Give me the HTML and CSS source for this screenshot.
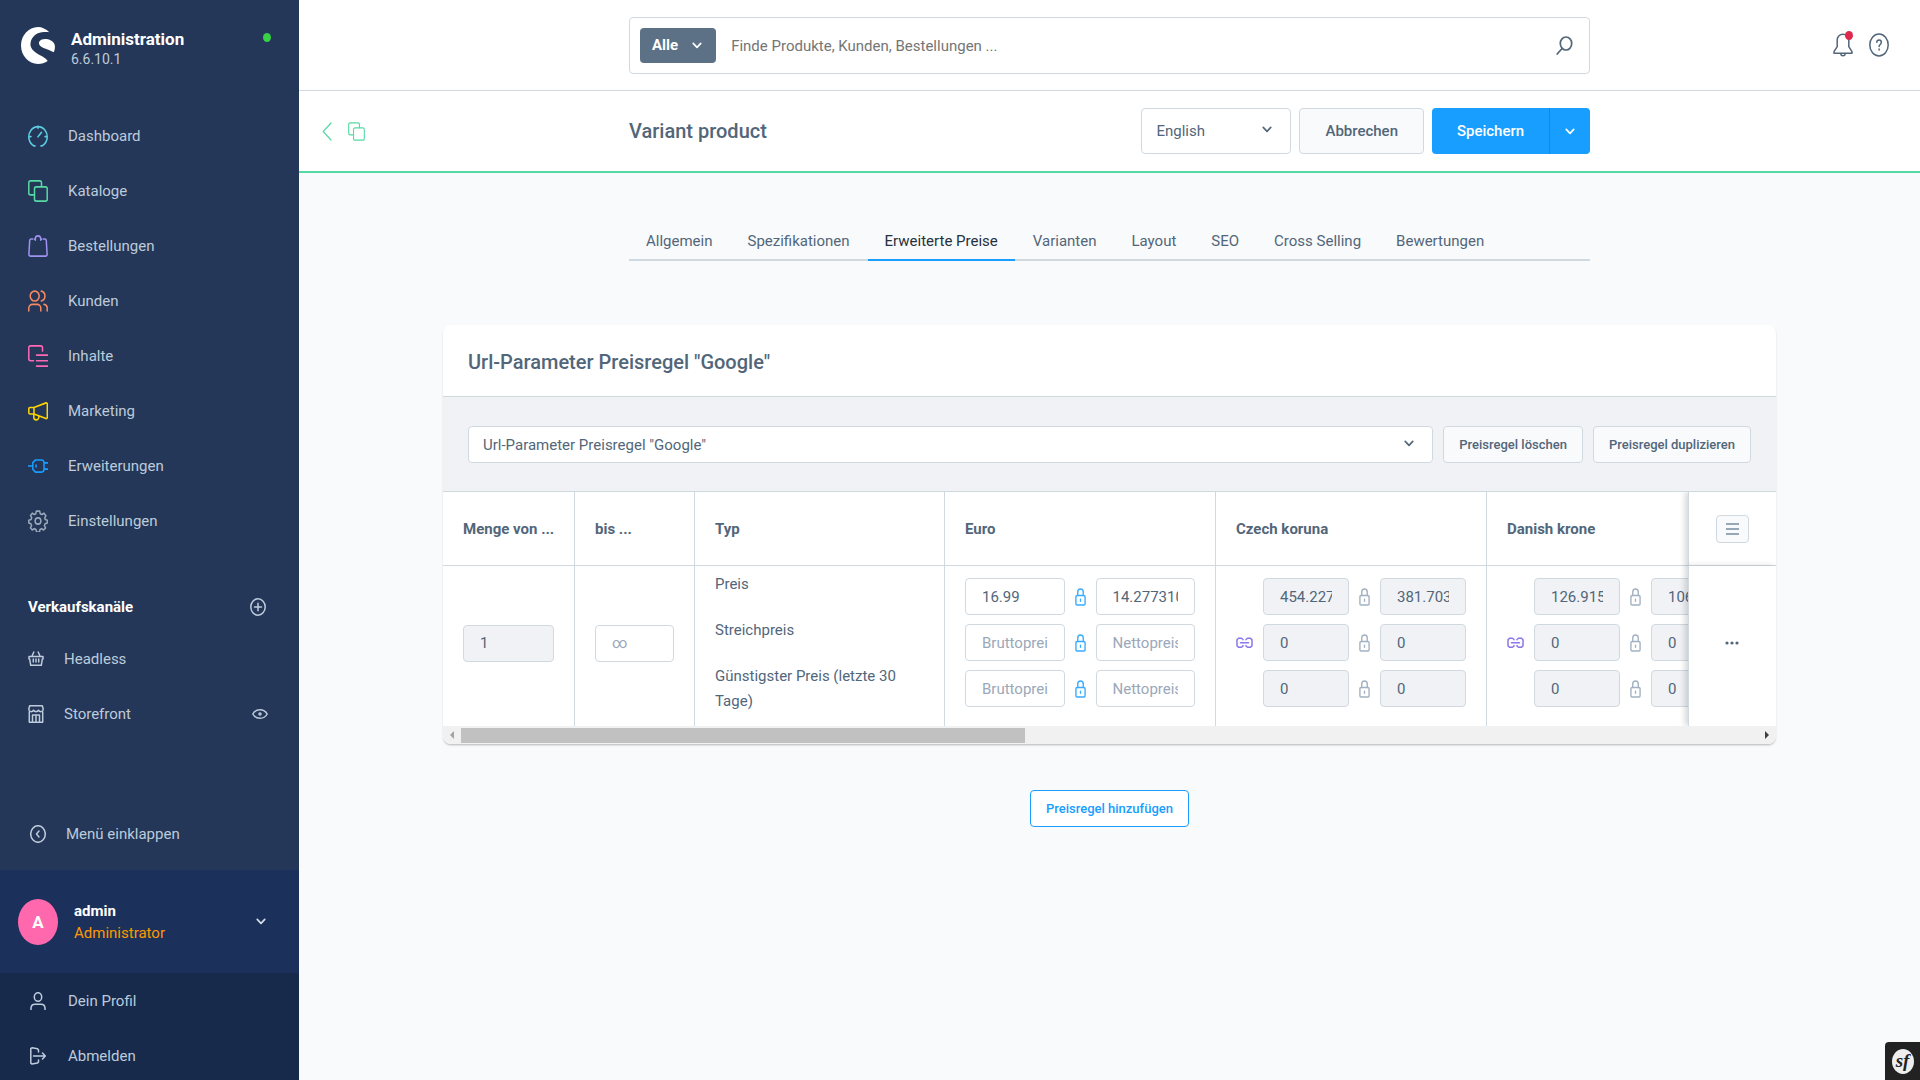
FILE: index.html
```html
<!DOCTYPE html>
<html lang="de">
<head>
<meta charset="utf-8">
<title>Variant product | Administration</title>
<link rel="stylesheet" href="styles.css">
</head>
<body>
<svg class="sprite" aria-hidden="true">
  <symbol id="chevron" viewBox="0 0 12 8" preserveAspectRatio="none"><path d="M1.5 1.5 6 6.2l4.500-4.700"/></symbol>
  <symbol id="lock" viewBox="0 0 12 18" preserveAspectRatio="none"><rect x="1" y="7.500" width="10" height="9.500" rx="1.200"/><path d="M3 7.500V4a3 3 0 0 1 6 0v3.500M6 11.200v2"/></symbol>
  <symbol id="link" viewBox="0 0 17 12" preserveAspectRatio="none"><path d="M7 2.800V2.500L5.500 1.200h-3L1 2.700v6l1.500 1.600h3L7 9V8.500M10 2.800V2.500l1.500-1.300h3L16 2.700v6l-1.500 1.600h-3L10 9V8.500M4.500 5.800h8"/></symbol>
  <symbol id="copy" viewBox="0 0 20 20" preserveAspectRatio="none"><path d="M6 13.500H2.500A1.700 1.700 0 0 1 .8 11.800V2.500A1.700 1.700 0 0 1 2.500.800h9.300a1.700 1.700 0 0 1 1.700 1.700V6"/><rect x="6.500" y="6.200" width="12.700" height="13" rx="1.700"/></symbol>
</svg>
<div class="app">
  <aside class="sidebar">
    <div class="brand">
      <svg class="logo" viewBox="0 0 102 111" preserveAspectRatio="none" aria-hidden="true"><path d="M85 16C75 6 63 0 51 0 23 0 0 25 0 55.500S23 111 51 111c11 0 21-3 29-9-3-9-25-17-38-27C30 66 27 57 29 46c3-16 17-28 33-30 10-1 18-1 23 0z"/><path d="M54 46c2-8 12-11 22-10 14 2 23 9 25 17 2 8 0 17-3 23-10-7-22-9-32-14-8-4-13-8-12-16z"/></svg>
      <div class="brand-text"><strong>Administration</strong><span>6.6.10.1</span></div>
      <span class="status-dot"></span>
    </div>
    <nav class="nav">
      <a href="#" class="cyan"><svg class="nav-icon" viewBox="0 0 20 20" preserveAspectRatio="none"><path d="M7 19H6A9.200 9.200 0 1 1 14 19H13M10 1v2M1 10.500h2M17 10.500h2M10 10.700l3.500-4"/></svg>Dashboard</a>
      <a href="#" class="green"><svg class="nav-icon"><use href="#copy"/></svg>Kataloge</a>
      <a href="#" class="violet"><svg class="nav-icon" viewBox="0 0 20 20" preserveAspectRatio="none"><path d="M4.800 3.600H3.200A1.500 1.500 0 0 0 1.700 5L.9 17.500A1.600 1.600 0 0 0 2.500 19.200h15a1.600 1.600 0 0 0 1.600-1.700L18.300 5a1.500 1.500 0 0 0-1.500-1.400h-1.600M7.300 4.800V3.500a2.700 2.700 0 0 1 5.400 0v1.300M7.300 3.800h-.8M12.700 3.800h.8"/></svg>Bestellungen</a>
      <a href="#" class="orange"><svg class="nav-icon" viewBox="0 0 20 20" preserveAspectRatio="none"><circle cx="6.700" cy="5.500" r="4.500"/><path d="M.8 19v-2.300a3.600 3.600 0 0 1 3.600-3.600h4.800a3.600 3.600 0 0 1 3.600 3.600V19M13.300 1a4.600 4.600 0 0 1 0 9M16 13.100a3.600 3.600 0 0 1 3.200 3.600V19"/></svg>Kunden</a>
      <a href="#" class="pink"><svg class="nav-icon" viewBox="0 0 20 20" preserveAspectRatio="none"><path d="M5.500 14.300H2.500A1.700 1.700 0 0 1 .8 12.600V2.500A1.700 1.700 0 0 1 2.500.8h10.300a1.700 1.700 0 0 1 1.700 1.700V5.500M8.500 9.200h11.300M8.500 14.300h11.300M8.500 19.200h11.300"/></svg>Inhalte</a>
      <a href="#" class="yellow"><svg class="nav-icon" viewBox="0 0 20 20" preserveAspectRatio="none"><path d="M6 6.800 18 2.600a1 1 0 0 1 1.300 1V16a1 1 0 0 1-1.300.9L6 12.700M6 6.800H2A1.200 1.200 0 0 0 .8 8v3.500a1.200 1.200 0 0 0 1.200 1.200h4zM5.800 12.700v2.800a2.500 2.500 0 0 0 5 .2v-1"/></svg>Marketing</a>
      <a href="#" class="blue"><svg class="nav-icon" viewBox="0 0 20 20" preserveAspectRatio="none"><path d="M.3 10h4.300M7.500 4.500h6A2.500 2.500 0 0 1 16 7v6a2.500 2.500 0 0 1-2.500 2.500h-6L4.800 13V7zM16 7.200h3.700M16 12.800h3.700M8 9.200v1.600"/></svg>Erweiterungen</a>
      <a href="#" class="grey"><svg class="nav-icon" viewBox="0 0 20 20" preserveAspectRatio="none"><circle cx="10" cy="10" r="2.900"/><path d="M8.300 1h3.400l.5 2.300 1.700.8 2.100-1.200 1.900 2.300-1.200 2 .6 1.500 2 .6v2.500l-2.200.7-.7 1.700 1.200 2.100-2 1.900-2-1.200-1.600.7-.5 2.300H8.500L8 17.700l-1.700-.7-2.100 1.200-1.800-2 1.200-2-.7-1.700-2.100-.7V9.300l2.200-.6.7-1.700-1.200-2L4.300 2.900l2 1.200L7.800 3.400z"/></svg>Einstellungen</a>
    </nav>
    <div class="channels">
      <div class="channels-head"><h2>Verkaufskanäle</h2>
        <button type="button" class="icon-button" aria-label="Verkaufskanal hinzufügen"><svg class="small-icon" viewBox="0 0 16 18" preserveAspectRatio="none"><ellipse cx="8" cy="9" rx="7.200" ry="8.200"/><path d="M8 5.200v7.600M4.500 9h7"/></svg></button></div>
      <a href="#"><svg class="small-icon" viewBox="0 0 16 18" preserveAspectRatio="none"><path d="M1 6.500h14v2.500h-.700L13.300 15.300H2.700L1.700 9H1zM5.800 2 3.800 6.500M10.200 2l2 4.500M5.300 9v3M8 9v3M10.700 9v3"/></svg>Headless</a>
      <a href="#"><svg class="small-icon" viewBox="0 0 16 18" preserveAspectRatio="none"><path d="M1.700.8h12.600l.9 3.200c0 3-3.300 3.600-4.800 1.200-1 2-3.800 2-4.800 0C4.100 7.600.8 7 .8 4zM1.300 6.500v10.700h13.400V6.500M4.500 17V10h7v7M8 10v7"/></svg>Storefront
        <svg class="eye" viewBox="0 0 16 12" preserveAspectRatio="none"><path d="M.8 6C4 .3 12 .3 15.200 6 12 11.700 4 11.700.8 6z"/><circle cx="8" cy="6" r="1"/></svg></a>
    </div>
    <div class="sidebar-bottom">
      <button type="button" class="collapse"><svg class="small-icon" viewBox="0 0 16 18" preserveAspectRatio="none"><ellipse cx="8" cy="9" rx="7.300" ry="8.300"/><path d="M9 6 6.500 9 9 12"/></svg>Menü einklappen</button>
      <button type="button" class="user">
        <span class="avatar">A</span>
        <span class="user-text"><strong>admin</strong><span>Administrator</span></span>
        <svg class="chevron"><use href="#chevron"/></svg>
      </button>
      <div class="user-menu">
        <a href="#"><svg class="small-icon" viewBox="0 0 16 18" preserveAspectRatio="none"><ellipse cx="8" cy="5" rx="3.700" ry="4.300"/><path d="M1 18v-2a4 4 0 0 1 4-3.700h6A4 4 0 0 1 15 16v2"/></svg>Dein Profil</a>
        <a href="#"><svg class="small-icon" viewBox="0 0 16 18" preserveAspectRatio="none"><path d="M8.500 5V3L7.500 1.800 2 .8.8 1.500v14.700l1.200.9 5.500-1 1-1.200V13M3.500 9h11.500M12.500 6 15.300 9l-2.800 3"/></svg>Abmelden</a>
      </div>
    </div>
  </aside>

  <main class="main">
    <header class="topbar">
      <form class="search" role="search">
        <button type="button" class="search-type">Alle<svg class="chevron"><use href="#chevron"/></svg></button>
        <input type="text" aria-label="Suche" placeholder="Finde Produkte, Kunden, Bestellungen ...">
        <button type="submit" class="icon-button" aria-label="Suchen"><svg class="magnifier" viewBox="0 0 17 19" preserveAspectRatio="none"><ellipse cx="10" cy="7.500" rx="5.700" ry="6.500"/><path d="M6.300 12.300 1.200 18"/></svg></button>
      </form>
      <div class="topbar-actions">
        <button type="button" class="icon-button" aria-label="Benachrichtigungen"><svg class="tool-icon" viewBox="0 0 20 24" preserveAspectRatio="none"><path d="M10 1.200c-3.600 0-5.800 2.600-5.800 6v6.500L1 18.700v1.500h18v-1.500l-3.200-5V7.200c0-3.400-2.200-6-5.800-6zM7.800 20.500c0 3 4.400 3 4.400 0"/></svg><span class="badge"></span></button>
        <button type="button" class="icon-button" aria-label="Hilfe"><svg class="tool-icon" viewBox="0 0 20 24" preserveAspectRatio="none"><ellipse cx="10" cy="12" rx="9.200" ry="11"/><path d="M7.800 9.300c.3-3 4.600-2.900 4.500.2 0 1.900-2.200 2-2.200 4M10.100 16v1"/></svg></button>
      </div>
    </header>

    <div class="smartbar">
      <div class="smartbar-back">
        <a href="#" aria-label="Zurück"><svg class="back" viewBox="0 0 10 19" preserveAspectRatio="none"><path d="M9 1 1.200 9.500 9 18"/></svg></a>
        <a href="#" aria-label="Produkte"><svg class="module"><use href="#copy"/></svg></a>
      </div>
      <div class="smartbar-content">
        <h1>Variant product</h1>
        <div class="smartbar-actions">
          <div class="select language"><select aria-label="Sprache"><option>English</option></select><svg class="chevron"><use href="#chevron"/></svg></div>
          <button type="button" class="button">Abbrechen</button>
          <div class="split"><button type="button">Speichern</button><button type="button" aria-label="Weitere Aktionen"><svg class="chevron"><use href="#chevron"/></svg></button></div>
        </div>
      </div>
    </div>

    <div class="content">
      <nav class="tabs">
        <a href="#">Allgemein</a><a href="#">Spezifikationen</a><a href="#" class="active">Erweiterte Preise</a><a href="#">Varianten</a><a href="#">Layout</a><a href="#">SEO</a><a href="#">Cross Selling</a><a href="#">Bewertungen</a>
      </nav>

      <section class="card">
        <h2 class="card-title">Url-Parameter Preisregel "Google"</h2>
        <div class="toolbar">
          <div class="select rule"><select aria-label="Preisregel"><option>Url-Parameter Preisregel "Google"</option></select><svg class="chevron"><use href="#chevron"/></svg></div>
          <button type="button" class="button small">Preisregel löschen</button>
          <button type="button" class="button small">Preisregel duplizieren</button>
        </div>
        <div class="grid-scroll">
          <table class="grid">
            <colgroup><col class="c-from"><col class="c-to"><col class="c-type"><col class="c-price"><col class="c-price"><col class="c-price"><col class="c-action"></colgroup>
            <thead><tr>
              <th>Menge von ...</th><th>bis ...</th><th>Typ</th><th>Euro</th><th>Czech koruna</th><th>Danish krone</th>
              <th class="sticky"><button type="button" class="columns" aria-label="Spalten"><svg viewBox="0 0 13 12"><path d="M0 1h13M0 6h13M0 11h13"/></svg></button></th>
            </tr></thead>
            <tbody><tr>
              <td><input class="field" aria-label="Menge von" value="1" disabled></td>
              <td><input class="field" aria-label="Menge bis" placeholder="∞"></td>
              <td class="types"><p>Preis</p><p>Streichpreis</p><p>Günstigster Preis (letzte 30 Tage)</p></td>
              <td class="prices">
                <div class="price"><input class="field" aria-label="Preis brutto Euro" value="16.99"><svg class="lock on"><use href="#lock"/></svg><input class="field" aria-label="Preis netto Euro" value="14.277310924"></div>
                <div class="price"><input class="field" aria-label="Streichpreis brutto Euro" placeholder="Bruttopreis"><svg class="lock on"><use href="#lock"/></svg><input class="field" aria-label="Streichpreis netto Euro" placeholder="Nettopreis"></div>
                <div class="price"><input class="field" aria-label="Günstigster Preis brutto Euro" placeholder="Bruttopreis"><svg class="lock on"><use href="#lock"/></svg><input class="field" aria-label="Günstigster Preis netto Euro" placeholder="Nettopreis"></div>
              </td>
              <td class="prices"><div class="inherited">
                <svg class="link"><use href="#link"/></svg>
                <div>
                <div class="price"><input class="field" aria-label="Preis brutto CZK" value="454.2276" disabled><svg class="lock"><use href="#lock"/></svg><input class="field" aria-label="Preis netto CZK" value="381.703" disabled></div>
                <div class="price"><input class="field" aria-label="Streichpreis brutto CZK" value="0" disabled><svg class="lock"><use href="#lock"/></svg><input class="field" aria-label="Streichpreis netto CZK" value="0" disabled></div>
                <div class="price"><input class="field" aria-label="Günstigster Preis brutto CZK" value="0" disabled><svg class="lock"><use href="#lock"/></svg><input class="field" aria-label="Günstigster Preis netto CZK" value="0" disabled></div>
                </div></div>
              </td>
              <td class="prices"><div class="inherited">
                <svg class="link"><use href="#link"/></svg>
                <div>
                <div class="price"><input class="field" aria-label="Preis brutto DKK" value="126.9152" disabled><svg class="lock"><use href="#lock"/></svg><input class="field" aria-label="Preis netto DKK" value="106.651" disabled></div>
                <div class="price"><input class="field" aria-label="Streichpreis brutto DKK" value="0" disabled><svg class="lock"><use href="#lock"/></svg><input class="field" aria-label="Streichpreis netto DKK" value="0" disabled></div>
                <div class="price"><input class="field" aria-label="Günstigster Preis brutto DKK" value="0" disabled><svg class="lock"><use href="#lock"/></svg><input class="field" aria-label="Günstigster Preis netto DKK" value="0" disabled></div>
                </div></div>
              </td>
              <td class="sticky"><button type="button" class="icon-button" aria-label="Aktionen"><svg class="dots" viewBox="0 0 14 4"><circle cx="2" cy="2" r="1.600"/><circle cx="7" cy="2" r="1.600"/><circle cx="12" cy="2" r="1.600"/></svg></button></td>
            </tr></tbody>
          </table>
        </div>
        <div class="scrollbar" aria-hidden="true"><span class="arrow left"></span><span class="track"><span class="thumb"></span></span><span class="arrow right"></span></div>
      </section>

      <button type="button" class="button small add">Preisregel hinzufügen</button>
    </div>
  </main>
</div>
<a href="#" class="debug" aria-label="Symfony"><span>sf</span></a>
</body>
</html>
```

FILE: styles.css
```css
* { box-sizing: border-box; }

body {
  margin: 0;
  font: 15px/24px Roboto, "Liberation Sans", sans-serif;
  color: #52667a;
  background: #f9fafb;
}

a { color: inherit; text-decoration: none; }
button, input, select { font: inherit; color: inherit; }
button { cursor: pointer; }
h1, h2, p { margin: 0; }

svg { display: block; flex: none; fill: none; stroke: currentColor; stroke-width: 1.5; stroke-linecap: round; stroke-linejoin: round; }
.sprite { position: absolute; width: 0; height: 0; }
.chevron { width: 10px; height: 7px; stroke-width: 2; }
.icon-button { display: flex; padding: 0; border: 0; background: none; position: relative; }

.app { display: flex; height: 100vh; overflow: hidden; }

/* Sidebar */
.sidebar {
  display: flex;
  flex-direction: column;
  flex: none;
  width: 299px;
  background: #243758;
  color: #bdcbdb;
}
.sidebar a, .collapse { display: flex; align-items: center; height: 55px; }
.small-icon { width: 16px; height: 18px; }

.brand { display: flex; align-items: flex-start; height: 108px; padding: 27px 28px 0 21px; }
.logo { width: 34px; height: 37px; fill: #fff; stroke: none; }
.brand-text { display: flex; flex-direction: column; flex: 1; margin-left: 16px; }
.brand-text strong { font-size: 17px; line-height: 24px; color: #fff; }
.brand-text span { font-size: 14px; line-height: 16px; }
.status-dot { width: 8px; height: 9px; margin-top: 6px; border-radius: 50%; background: #37d046; }

.nav a { padding-left: 28px; gap: 20px; }
.nav-icon { width: 20px; height: 22px; }
.cyan svg { color: #5bcde0; }
.green svg { color: #57d9a3; }
.violet svg { color: #a092f0; }
.orange svg { color: #f88962; }
.pink svg { color: #ff68b4; }
.yellow svg { color: #ffd700; }
.blue svg { color: #189eff; }
.grey svg { color: #98a8b8; }

.channels { margin-top: 35px; padding: 0 31px 0 28px; }
.channels-head { display: flex; align-items: center; justify-content: space-between; height: 48px; padding-right: 2px; }
.channels-head h2 { font-size: 15px; line-height: 24px; font-weight: 700; color: #fff; }
.channels a { gap: 20px; }
.eye { width: 16px; height: 12px; margin-left: auto; }

.sidebar-bottom { margin: auto 0 -3px; }
.collapse { width: 100%; padding: 0 0 0 30px; margin-bottom: 9px; gap: 20px; border: 0; background: none; }
.user {
  display: flex;
  align-items: center;
  width: 100%;
  height: 103px;
  padding: 0 33px 0 18px;
  border: 0;
  background: #1b315c;
  text-align: left;
}
.avatar {
  display: flex;
  align-items: center;
  justify-content: center;
  width: 40px;
  height: 46px;
  border-radius: 50%;
  background: #ff68ac;
  color: #fff;
  font-size: 17px;
  font-weight: 700;
}
.user-text { display: flex; flex-direction: column; flex: 1; margin-left: 16px; line-height: 22px; color: #ff9800; }
.user-text strong { color: #fff; }
.user .chevron { color: #d6dfe8; }
.user-menu { background: #172a4c; }
.user-menu a { padding-left: 30px; gap: 22px; }

/* Header */
.main { flex: 1; min-width: 0; overflow: hidden; }
.topbar, .smartbar { display: grid; grid-template-columns: 1fr minmax(0, 961px) 1fr; align-items: center; background: #fff; }
.topbar { height: 91px; border-bottom: 1px solid #d1d9e0; }
.search {
  grid-column: 2;
  display: flex;
  align-items: center;
  height: 57px;
  padding: 0 16px 0 10px;
  border: 1px solid #d1d9e0;
  border-radius: 4px;
}
.search-type {
  display: flex;
  align-items: center;
  gap: 14px;
  height: 35px;
  padding: 0 14px 0 12px;
  border: 0;
  border-radius: 4px;
  background: #5c7086;
  color: #fff;
  font-weight: 700;
}
.search input { flex: 1; min-width: 0; padding: 2px 15px 0; border: 0; outline: 0; background: none; }
.search input::placeholder { color: #757575; opacity: 1; }
.magnifier { width: 17px; height: 19px; stroke-width: 1.7; }
.topbar-actions { display: flex; justify-content: flex-end; gap: 16px; padding-right: 31px; }
.tool-icon { width: 20px; height: 24px; }
.badge { position: absolute; top: -2px; right: 0; width: 8px; height: 9px; border-radius: 50%; background: #de294c; }

.smartbar { height: 82px; border-bottom: 2px solid #57d9a3; }
.smartbar-back { display: flex; align-items: center; gap: 16px; padding-left: 23px; color: #57d9a3; }
.back { width: 10px; height: 19px; stroke-width: 1.2; }
.module { width: 17px; height: 19px; stroke-width: 1.3; }
.smartbar-content { display: flex; align-items: center; justify-content: space-between; }
.smartbar h1 { font-size: 20px; line-height: 26px; font-weight: 500; }
.smartbar-actions { display: flex; gap: 8px; }

.button, .select select {
  height: 46px;
  border: 1px solid #d1d9e0;
  border-radius: 4px;
}
.button { padding: 0 25px; background: #f9fafb; font-weight: 500; white-space: nowrap; }
.button.small { height: 37px; padding: 0 15px; font-size: 13px; }
.select { position: relative; }
.select select { width: 100%; padding: 0 32px 0 14px; appearance: none; background: #fff; }
.select .chevron { position: absolute; top: 50%; right: 19px; margin-top: -5px; pointer-events: none; }
.language { width: 150px; }
.split { display: flex; }
.split button { display: flex; align-items: center; justify-content: center; width: 40px; height: 46px; padding: 0; border: 0; background: #189eff; color: #fff; font-weight: 500; }
.split button:first-child { width: 118px; border-right: 1px solid #0f8ae4; border-radius: 4px 0 0 4px; }
.split button:last-child { border-radius: 0 4px 4px 0; }

/* Content */
.content { display: flex; flex-direction: column; align-items: center; padding: 48px 24px; }
.tabs { display: flex; gap: 1px; width: 100%; max-width: 961px; height: 40px; border-bottom: 2px solid #d1d9e0; }
.tabs a { height: 40px; padding: 8px 17px 0; white-space: nowrap; }
.tabs .active { border-bottom: 2px solid #189eff; color: #27313c; }

.card {
  width: 100%;
  max-width: 1333px;
  margin: 64px 0 46px;
  border-radius: 8px;
  background: #fff;
  box-shadow: 0 1px 1px rgba(0, 0, 0, .12), 0 2px 2px rgba(0, 0, 0, .1);
  overflow: hidden;
}
.card-title { padding: 25px 25px 22px; font-size: 20px; line-height: 24px; font-weight: 500; border-bottom: 1px solid #d1d9e0; }
.toolbar { display: flex; gap: 10px; padding: 29px 25px 28px; background: #f0f2f5; border-bottom: 1px solid #d1d9e0; }
.rule { flex: 1; min-width: 0; }
.rule select { height: 37px; }

.grid-scroll { overflow: hidden; }
.grid { width: 1403px; table-layout: fixed; border-collapse: separate; border-spacing: 0; }
.c-from { width: 132px; }
.c-to { width: 120px; }
.c-type { width: 250px; }
.c-price { width: 271px; }
.c-action { width: 88px; }
.grid th, .grid td { padding: 0 20px; border-right: 1px solid #d1d9e0; text-align: left; }
.grid th { height: 74px; font-weight: 700; border-bottom: 1px solid #d1d9e0; white-space: nowrap; }
.grid td { height: 160px; padding-bottom: 6px; }
.grid .sticky { position: sticky; right: 0; z-index: 1; padding-left: 27px; background: #fff; border-right: 0; border-left: 1px solid #d1d9e0; box-shadow: -3px 0 6px rgba(0, 0, 0, .16); }
.grid .types { vertical-align: top; padding: 6px 36px 0 20px; line-height: 25px; }
.types p + p { margin-top: 21px; }
.grid .prices { vertical-align: top; padding-top: 12px; }
.price { display: flex; align-items: center; gap: 10px; }
.price + .price { margin-top: 9px; }
.field { flex: 1; width: 100%; min-width: 0; height: 37px; padding: 0 16px; border: 1px solid #d1d9e0; border-radius: 4px; background: #fff; outline: 0; }
.field::placeholder { color: #9aa8b9; opacity: 1; }
.field:disabled { background: #f0f2f5; }
.lock { width: 11px; height: 18px; color: #a3b1c2; }
.lock.on { color: #3aacff; }
.inherited { display: flex; align-items: center; gap: 10px; }
.link { width: 17px; height: 12px; color: #8a75ea; }
.columns { display: flex; align-items: center; justify-content: center; width: 33px; height: 28px; padding: 0; border: 1px solid #d1d9e0; border-radius: 4px; background: #f9fafb; }
.columns svg { width: 13px; height: 12px; color: #758ca3; }
.dots { width: 14px; height: 4px; margin-left: 9px; fill: currentColor; stroke: none; }

.scrollbar { display: flex; align-items: center; height: 18px; background: #f1f1f1; }
.track { flex: 1; }
.thumb { display: block; width: 43.5%; height: 15px; background: #c1c1c1; }
.arrow { display: flex; justify-content: center; width: 18px; }
.arrow::before { content: ""; border: 4px solid transparent; }
.left::before { border-right-color: #a3a3a3; border-left-width: 0; }
.right::before { border-left-color: #404040; border-right-width: 0; }

.button.add { border-color: #189eff; background: #fff; color: #189eff; }

.debug {
  position: fixed;
  right: 0;
  bottom: 0;
  display: flex;
  align-items: center;
  justify-content: center;
  width: 35px;
  height: 38px;
  border-radius: 4px 0 0 0;
  background: #222;
}
.debug span { width: 22px; height: 25px; border-radius: 50%; background: #eee; color: #222; font: italic bold 19px/23px "Liberation Serif", serif; text-align: center; }
```
